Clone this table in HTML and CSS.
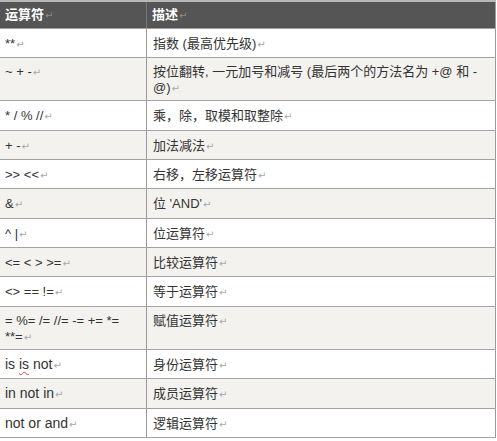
FILE: index.html
```html
<!DOCTYPE html>
<html>
<head>
<meta charset="utf-8">
<link rel="stylesheet" href="styles.css">
</head>
<body>
<table class="ops">
  <thead>
    <tr><th class="c1">运算符<span class="pm">↵</span></th><th class="c2">描述<span class="pm">↵</span></th></tr>
  </thead>
  <tbody>
    <tr><td>**<span class="pm">↵</span></td><td>指数 (最高优先级)<span class="pm">↵</span></td></tr>
    <tr class="two"><td>~ + -<span class="pm">↵</span></td><td>按位翻转, 一元加号和减号 (最后两个的方法名为 +@ 和 -<br>@)<span class="pm">↵</span></td></tr>
    <tr class="tall"><td>* / % //<span class="pm">↵</span></td><td>乘，除，取模和取整除<span class="pm">↵</span></td></tr>
    <tr><td>+ -<span class="pm">↵</span></td><td>加法减法<span class="pm">↵</span></td></tr>
    <tr><td>&gt;&gt; &lt;&lt;<span class="pm">↵</span></td><td>右移，左移运算符<span class="pm">↵</span></td></tr>
    <tr class="tall"><td>&amp;<span class="pm">↵</span></td><td>位 'AND'<span class="pm">↵</span></td></tr>
    <tr><td>^ |<span class="pm">↵</span></td><td>位运算符<span class="pm">↵</span></td></tr>
    <tr><td>&lt;= &lt; &gt; &gt;=<span class="pm">↵</span></td><td>比较运算符<span class="pm">↵</span></td></tr>
    <tr class="tall"><td>&lt;&gt; == !=<span class="pm">↵</span></td><td>等于运算符<span class="pm">↵</span></td></tr>
    <tr class="two"><td>= %= /= //= -= += *=<br>**=<span class="pm">↵</span></td><td>赋值运算符<span class="pm">↵</span></td></tr>
    <tr class="big"><td>is <span class="sq">is</span> not<span class="pm">↵</span></td><td>身份运算符<span class="pm">↵</span></td></tr>
    <tr class="big tall"><td>in not in<span class="pm">↵</span></td><td>成员运算符<span class="pm">↵</span></td></tr>
    <tr class="big"><td>not or and<span class="pm">↵</span></td><td>逻辑运算符<span class="pm">↵</span></td></tr>
  </tbody>
</table>
</body>
</html>
```

FILE: styles.css
```css
html, body {
  margin: 0;
  padding: 0;
  background: #ffffff;
}

.ops {
  border-collapse: collapse;
  width: 496px;
  table-layout: fixed;
  font-family: "Liberation Sans", "Noto Sans CJK SC", sans-serif;
  font-size: 13px;
  color: #333333;
  border-top: 2px solid #b8b8b8;
  border-right: 1px solid #9a9a9a;
}

.ops th {
  background: #555555;
  color: #ffffff;
  font-weight: bold;
  text-align: left;
  padding: 0 5px;
  height: 26px;
  line-height: 16px;
  vertical-align: middle;
  border-left: 1px solid #777777;
  border-bottom: 1px solid #a0a0a0;
}

.ops th.c1 {
  width: 136px;
  border-left: none;
}

.ops td {
  padding: 7px 5px 0 5px;
  height: 21px;
  line-height: 15px;
  vertical-align: top;
  border-bottom: 1px solid #a3a3a3;
  border-left: 1px solid #9a9a9a;
}

.ops tbody tr.tall td {
  height: 22px;
}

.ops tbody tr.two td {
  height: 36px;
  line-height: 16px;
  padding-top: 6px;
}

.ops td:first-child {
  border-left: none;
}

.ops td + td {
  padding-left: 6px;
}

.ops tbody tr:nth-child(even) td {
  background: #f3f2ef;
}

.ops tbody tr:nth-child(odd) td {
  background: #ffffff;
}

.ops tr.big td:first-child {
  font-size: 14px;
}

.pm {
  font-family: "DejaVu Sans", sans-serif;
  font-size: 10px;
  line-height: 0;
  color: #a8a8a8;
  font-weight: normal;
  margin-left: 1px;
}

.ops th .pm {
  color: #8a8a8a;
}

.sq {
  text-decoration: underline wavy #d04040;
  text-decoration-thickness: 1px;
  text-underline-offset: 2px;
}
```
